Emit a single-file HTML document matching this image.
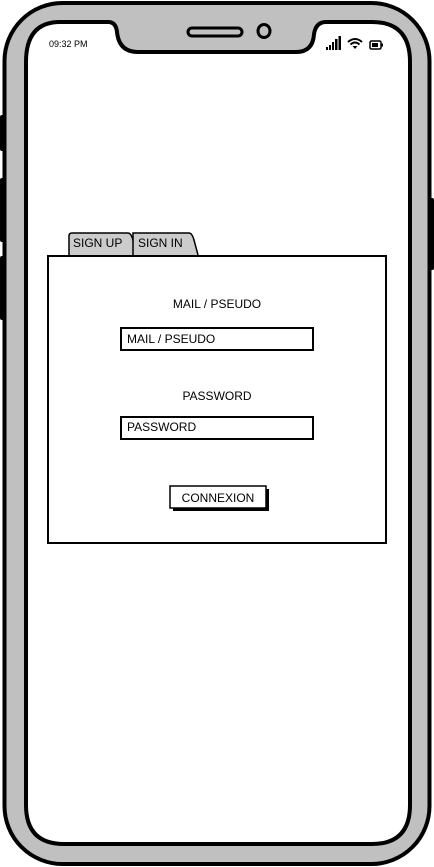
<!DOCTYPE html>
<html><head><meta charset="utf-8"><style>
html,body{margin:0;padding:0;background:#fff;width:434px;height:867px;overflow:hidden}
svg{display:block}
text{font-family:"Liberation Sans",sans-serif;fill:#000}
</style></head><body>
<svg width="434" height="867" viewBox="0 0 434 867">
<!-- side buttons -->
<rect x="0" y="115" width="5" height="36" rx="2" fill="#000"/>
<rect x="0" y="178" width="5" height="64" rx="2" fill="#000"/>
<rect x="0" y="256" width="5" height="64" rx="2" fill="#000"/>
<rect x="429" y="198" width="5" height="72" rx="2" fill="#000"/>
<!-- outer body -->
<rect x="4.5" y="3" width="425" height="861" rx="58" fill="#c0c0c0" stroke="#000" stroke-width="4"/>
<!-- screen -->
<path d="M60,22 L108,22 Q116,22 117,32 Q119,52 138,52 L296,52 Q313,52 314,34 Q316,22 326,22 L372,22 Q410,22 410,62 L410,805 Q410,844 372,844 L64,844 Q26,844 26,805 L26,62 Q26,22 60,22 Z" fill="#fff" stroke="#000" stroke-width="4"/>
<!-- speaker and camera -->
<rect x="188" y="28" width="54" height="8" rx="4" fill="none" stroke="#000" stroke-width="3"/>
<ellipse cx="264" cy="31" rx="6" ry="6.5" fill="none" stroke="#000" stroke-width="3"/>
<text x="49" y="47" font-size="9">09:32 PM</text>
<!-- signal -->
<rect x="326" y="47" width="2" height="3" fill="#000"/>
<rect x="329" y="45" width="2" height="5" fill="#000"/>
<rect x="332" y="42" width="2" height="8" fill="#000"/>
<rect x="335" y="39" width="2.5" height="11" fill="#000"/>
<rect x="338.5" y="36" width="2.5" height="14" fill="#000"/>
<!-- wifi -->
<path d="M348,42 Q355,36 362,42 M350.5,44.5 Q355,40.5 359.5,44.5" fill="none" stroke="#000" stroke-width="2"/>
<path d="M352.5,46 L355,49 L357.5,46 Z" fill="#000"/>
<!-- battery -->
<rect x="370" y="41" width="11" height="8" rx="1.5" fill="none" stroke="#000" stroke-width="1.5"/>
<rect x="372" y="43" width="6" height="4" fill="#000"/>
<rect x="381.5" y="43.5" width="1.5" height="3" fill="#000"/>
<!-- tabs -->
<path d="M69,255 L69,236 Q69,233 72,233 L128,233 Q131,233 133,240 L135,255" fill="#ccc" stroke="#000" stroke-width="1.5"/>
<path d="M133,255 L133,233 L189,233 Q192,233 194,240 L198,255" fill="#ccc" stroke="#000" stroke-width="1.5"/>
<text x="73" y="247" font-size="12">SIGN UP</text>
<text x="138" y="247" font-size="12">SIGN IN</text>
<!-- panel -->
<rect x="48" y="256" width="338" height="287" fill="#fff" stroke="#000" stroke-width="2"/>
<text x="217" y="308" font-size="12" text-anchor="middle">MAIL / PSEUDO</text>
<rect x="121" y="328" width="192" height="22" fill="#fff" stroke="#000" stroke-width="2"/>
<text x="127" y="343" font-size="12">MAIL / PSEUDO</text>
<text x="217" y="400" font-size="12" text-anchor="middle">PASSWORD</text>
<rect x="121" y="417" width="192" height="22" fill="#fff" stroke="#000" stroke-width="2"/>
<text x="127" y="431" font-size="12">PASSWORD</text>
<rect x="173" y="489" width="96" height="22" fill="#000"/>
<rect x="170" y="486" width="96" height="22" fill="#fff" stroke="#000" stroke-width="1.5"/>
<text x="218" y="502" font-size="12" text-anchor="middle">CONNEXION</text>
</svg>
</body></html>
